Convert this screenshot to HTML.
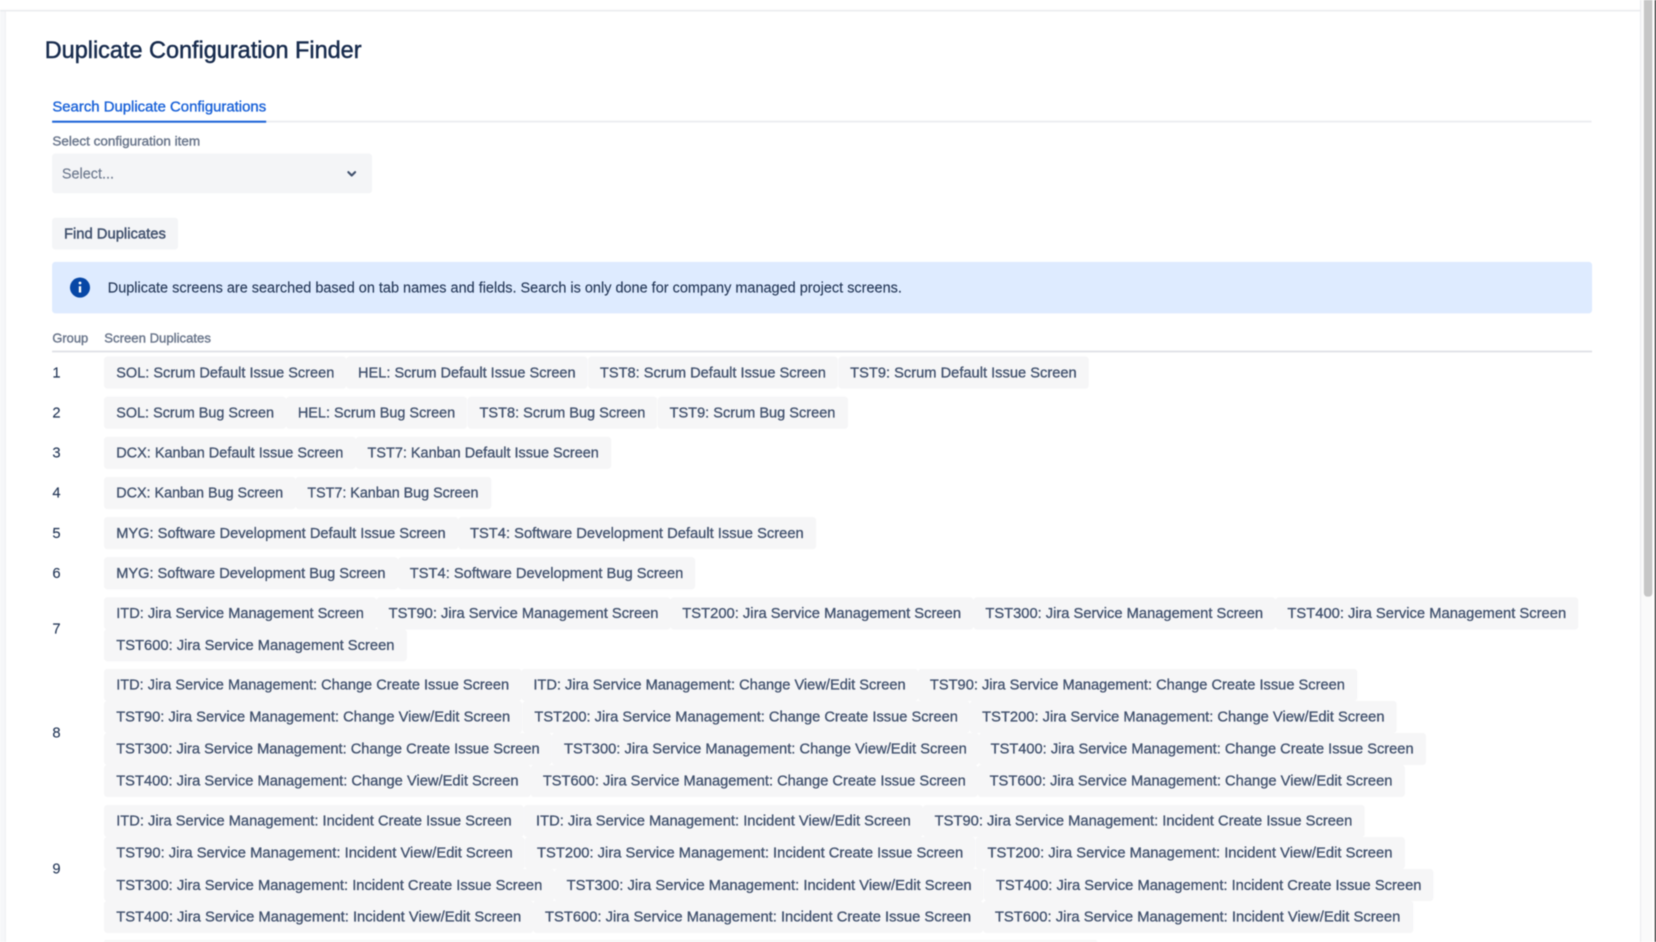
<!DOCTYPE html>
<html><head><meta charset="utf-8"><title>Duplicate Configuration Finder</title>
<style>
html,body{margin:0;padding:0;width:1656px;height:942px;overflow:hidden;background:#fff}
svg{display:block;position:absolute;left:0;top:0;filter:blur(.45px)}
text{font-family:"Liberation Sans",sans-serif;font-size:14px;fill:#42526e;stroke:#42526e;stroke-width:.3px;transform:translateY(-.4px)}
.c{fill:#f6f6f7;stroke:#f6f6f7;stroke-width:.5px}
.l{font-size:12px;fill:#6b778c;stroke:#6b778c;stroke-width:.38px}
.n{fill:#253858;stroke:#253858;stroke-width:.12px}
</style></head><body>
<svg width="1656" height="942" viewBox="0 0 1568 892" xmlns="http://www.w3.org/2000/svg">
<rect x="0" y="0" width="1568" height="892" fill="#fff"/>
<rect x="0" y="10" width="4.5" height="882" fill="#f6f7f9"/>
<rect x="4.5" y="10" width="1" height="882" fill="#eeeff2"/>
<rect x="0" y="9.3" width="1553" height="1.6" fill="#ebecef"/>
<rect x="1553" y="0" width="1" height="892" fill="#e8e9ec"/>
<rect x="1554" y="0" width="10.6" height="892" fill="#fafafa"/>
<rect x="1556.6" y="-6" width="8" height="571" rx="3.5" fill="#c6c6c6"/>
<rect x="1567" y="0" width="1" height="892" fill="#000"/>

<text x="42.3" y="55.4" textLength="300" lengthAdjust="spacingAndGlyphs" style="font-size:23px;fill:#172b4d;stroke:#172b4d;stroke-width:.45px">Duplicate Configuration Finder</text>

<text x="49.5" y="106" textLength="202.5" lengthAdjust="spacingAndGlyphs" style="fill:#1a62d8;stroke:#1a62d8;stroke-width:.35px">Search Duplicate Configurations</text>
<rect x="49.3" y="114.3" width="1457.7" height="1.7" fill="#ebecf0"/>
<rect x="49.3" y="114.3" width="202.7" height="1.9" fill="#1a62d8"/>

<text class="l" x="49.5" y="138" textLength="140" lengthAdjust="spacingAndGlyphs">Select configuration item</text>
<rect x="49.3" y="145.4" width="302.9" height="37.6" rx="3" fill="#f4f5f7"/>
<text x="58.5" y="169.3" textLength="49.5" lengthAdjust="spacingAndGlyphs" style="fill:#6b778c;stroke:#6b778c;stroke-width:.12px">Select...</text>
<path d="M329.8 163l3.2 3.2 3.2-3.2" fill="none" stroke="#42526e" stroke-width="2" stroke-linecap="round" stroke-linejoin="round"/>

<rect x="49.3" y="206.2" width="119.2" height="30" rx="3" fill="#f4f5f7"/>
<text x="60.5" y="226.4" textLength="96.5" lengthAdjust="spacingAndGlyphs" style="stroke-width:.42px">Find Duplicates</text>

<rect x="49.3" y="248" width="1458.2" height="48.7" rx="3" fill="#deebff"/>
<circle cx="75.7" cy="272.3" r="9.5" fill="#0747a6"/>
<rect x="74.6" y="271" width="2.2" height="6" fill="#fff"/>
<circle cx="75.7" cy="268" r="1.3" fill="#fff"/>
<text class="n" x="102" y="277.4" textLength="752" lengthAdjust="spacingAndGlyphs">Duplicate screens are searched based on tab names and fields. Search is only done for company managed project screens.</text>

<text class="l" x="49.5" y="324.9" textLength="34" lengthAdjust="spacingAndGlyphs">Group</text>
<text class="l" x="98.7" y="324.9" textLength="101" lengthAdjust="spacingAndGlyphs">Screen Duplicates</text>
<rect x="49.3" y="332" width="1458.2" height="1.7" fill="#dfe1e6"/>

<text class="n" x="49.5" y="357.7">1</text>
<text class="n" x="49.5" y="395.7">2</text>
<text class="n" x="49.5" y="433.7">3</text>
<text class="n" x="49.5" y="471.7">4</text>
<text class="n" x="49.5" y="509.7">5</text>
<text class="n" x="49.5" y="547.7">6</text>
<text class="n" x="49.5" y="600.5">7</text>
<text class="n" x="49.5" y="699">8</text>
<text class="n" x="49.5" y="827.5">9</text>

<!-- chips -->
<rect class="c" x="98.7" y="337.8" width="229" height="30" rx="3"/><rect class="c" x="328" y="337.8" width="228" height="30" rx="3"/><rect class="c" x="557" y="337.8" width="236" height="30" rx="3"/><rect class="c" x="794" y="337.8" width="236.7" height="30" rx="3"/>
<text x="110" y="357.7" textLength="206.5" lengthAdjust="spacingAndGlyphs">SOL: Scrum Default Issue Screen</text><text x="339" y="357.7" textLength="206" lengthAdjust="spacingAndGlyphs">HEL: Scrum Default Issue Screen</text><text x="568" y="357.7" textLength="214" lengthAdjust="spacingAndGlyphs">TST8: Scrum Default Issue Screen</text><text x="805" y="357.7" textLength="214.5" lengthAdjust="spacingAndGlyphs">TST9: Scrum Default Issue Screen</text>

<rect class="c" x="98.7" y="375.8" width="172" height="30" rx="3"/><rect class="c" x="271" y="375.8" width="171" height="30" rx="3"/><rect class="c" x="443" y="375.8" width="179" height="30" rx="3"/><rect class="c" x="623" y="375.8" width="179.7" height="30" rx="3"/>
<text x="110" y="395.7" textLength="149.5" lengthAdjust="spacingAndGlyphs">SOL: Scrum Bug Screen</text><text x="282" y="395.7" textLength="149" lengthAdjust="spacingAndGlyphs">HEL: Scrum Bug Screen</text><text x="454" y="395.7" textLength="157" lengthAdjust="spacingAndGlyphs">TST8: Scrum Bug Screen</text><text x="634" y="395.7" textLength="157" lengthAdjust="spacingAndGlyphs">TST9: Scrum Bug Screen</text>

<rect class="c" x="98.7" y="413.8" width="238" height="30" rx="3"/><rect class="c" x="337" y="413.8" width="241.5" height="30" rx="3"/>
<text x="110" y="433.7" textLength="215" lengthAdjust="spacingAndGlyphs">DCX: Kanban Default Issue Screen</text><text x="348" y="433.7" textLength="219" lengthAdjust="spacingAndGlyphs">TST7: Kanban Default Issue Screen</text>

<rect class="c" x="98.7" y="451.8" width="181" height="30" rx="3"/><rect class="c" x="280" y="451.8" width="185" height="30" rx="3"/>
<text x="110" y="471.7" textLength="158" lengthAdjust="spacingAndGlyphs">DCX: Kanban Bug Screen</text><text x="291" y="471.7" textLength="162" lengthAdjust="spacingAndGlyphs">TST7: Kanban Bug Screen</text>

<rect class="c" x="98.7" y="489.8" width="335" height="30" rx="3"/><rect class="c" x="434" y="489.8" width="338.5" height="30" rx="3"/>
<text x="110" y="509.7" textLength="312" lengthAdjust="spacingAndGlyphs">MYG: Software Development Default Issue Screen</text><text x="445" y="509.7" textLength="316" lengthAdjust="spacingAndGlyphs">TST4: Software Development Default Issue Screen</text>

<rect class="c" x="98.7" y="527.8" width="278" height="30" rx="3"/><rect class="c" x="377" y="527.8" width="281" height="30" rx="3"/>
<text x="110" y="547.7" textLength="255" lengthAdjust="spacingAndGlyphs">MYG: Software Development Bug Screen</text><text x="388" y="547.7" textLength="259" lengthAdjust="spacingAndGlyphs">TST4: Software Development Bug Screen</text>

<rect class="c" x="98.7" y="565.8" width="257.5" height="30" rx="3"/><rect class="c" x="356.7" y="565.8" width="278" height="30" rx="3"/><rect class="c" x="635" y="565.8" width="286.5" height="30" rx="3"/><rect class="c" x="922" y="565.8" width="285.5" height="30" rx="3"/><rect class="c" x="1208" y="565.8" width="286.2" height="30" rx="3"/>
<text x="110" y="585.7" textLength="234.5" lengthAdjust="spacingAndGlyphs">ITD: Jira Service Management Screen</text><text x="368" y="585.7" textLength="255.5" lengthAdjust="spacingAndGlyphs">TST90: Jira Service Management Screen</text><text x="646" y="585.7" textLength="264" lengthAdjust="spacingAndGlyphs">TST200: Jira Service Management Screen</text><text x="933" y="585.7" textLength="263" lengthAdjust="spacingAndGlyphs">TST300: Jira Service Management Screen</text><text x="1219" y="585.7" textLength="264" lengthAdjust="spacingAndGlyphs">TST400: Jira Service Management Screen</text>

<rect class="c" x="98.7" y="596" width="286.3" height="30" rx="3"/>
<text x="110" y="615.7" textLength="263.5" lengthAdjust="spacingAndGlyphs">TST600: Jira Service Management Screen</text>

<rect class="c" x="98.7" y="633.6" width="395" height="30" rx="3"/><rect class="c" x="494" y="633.6" width="375" height="30" rx="3"/><rect class="c" x="869.5" y="633.6" width="415.5" height="30" rx="3"/>
<text x="110" y="653.5" textLength="372" lengthAdjust="spacingAndGlyphs">ITD: Jira Service Management: Change Create Issue Screen</text><text x="505" y="653.5" textLength="352.5" lengthAdjust="spacingAndGlyphs">ITD: Jira Service Management: Change View/Edit Screen</text><text x="880.5" y="653.5" textLength="393" lengthAdjust="spacingAndGlyphs">TST90: Jira Service Management: Change Create Issue Screen</text>

<rect class="c" x="98.7" y="663.9" width="395.5" height="30" rx="3"/><rect class="c" x="495" y="663.9" width="423" height="30" rx="3"/><rect class="c" x="918.5" y="663.9" width="403.7" height="30" rx="3"/>
<text x="110" y="683.7" textLength="373" lengthAdjust="spacingAndGlyphs">TST90: Jira Service Management: Change View/Edit Screen</text><text x="506" y="683.7" textLength="401" lengthAdjust="spacingAndGlyphs">TST200: Jira Service Management: Change Create Issue Screen</text><text x="930" y="683.7" textLength="381" lengthAdjust="spacingAndGlyphs">TST200: Jira Service Management: Change View/Edit Screen</text>

<rect class="c" x="98.7" y="694.2" width="423.5" height="30" rx="3"/><rect class="c" x="522.7" y="694.2" width="404" height="30" rx="3"/><rect class="c" x="927" y="694.2" width="423" height="30" rx="3"/>
<text x="110" y="714" textLength="401" lengthAdjust="spacingAndGlyphs">TST300: Jira Service Management: Change Create Issue Screen</text><text x="534" y="714" textLength="381.5" lengthAdjust="spacingAndGlyphs">TST300: Jira Service Management: Change View/Edit Screen</text><text x="938" y="714" textLength="400.5" lengthAdjust="spacingAndGlyphs">TST400: Jira Service Management: Change Create Issue Screen</text>

<rect class="c" x="98.7" y="724.5" width="403.5" height="30" rx="3"/><rect class="c" x="502.7" y="724.5" width="423" height="30" rx="3"/><rect class="c" x="926" y="724.5" width="404" height="30" rx="3"/>
<text x="110" y="744.3" textLength="381" lengthAdjust="spacingAndGlyphs">TST400: Jira Service Management: Change View/Edit Screen</text><text x="514" y="744.3" textLength="400.5" lengthAdjust="spacingAndGlyphs">TST600: Jira Service Management: Change Create Issue Screen</text><text x="937" y="744.3" textLength="381.5" lengthAdjust="spacingAndGlyphs">TST600: Jira Service Management: Change View/Edit Screen</text>

<rect class="c" x="98.7" y="762.5" width="397" height="30" rx="3"/><rect class="c" x="496.2" y="762.5" width="377.5" height="30" rx="3"/><rect class="c" x="874" y="762.5" width="418" height="30" rx="3"/>
<text x="110" y="782.3" textLength="374.5" lengthAdjust="spacingAndGlyphs">ITD: Jira Service Management: Incident Create Issue Screen</text><text x="507.5" y="782.3" textLength="355" lengthAdjust="spacingAndGlyphs">ITD: Jira Service Management: Incident View/Edit Screen</text><text x="885" y="782.3" textLength="395.5" lengthAdjust="spacingAndGlyphs">TST90: Jira Service Management: Incident Create Issue Screen</text>

<rect class="c" x="98.7" y="792.8" width="398" height="30" rx="3"/><rect class="c" x="497.2" y="792.8" width="426" height="30" rx="3"/><rect class="c" x="924" y="792.8" width="406" height="30" rx="3"/>
<text x="110" y="812.6" textLength="375.5" lengthAdjust="spacingAndGlyphs">TST90: Jira Service Management: Incident View/Edit Screen</text><text x="508.5" y="812.6" textLength="403.5" lengthAdjust="spacingAndGlyphs">TST200: Jira Service Management: Incident Create Issue Screen</text><text x="935" y="812.6" textLength="383.5" lengthAdjust="spacingAndGlyphs">TST200: Jira Service Management: Incident View/Edit Screen</text>

<rect class="c" x="98.7" y="823.1" width="426" height="30" rx="3"/><rect class="c" x="525.2" y="823.1" width="406" height="30" rx="3"/><rect class="c" x="932" y="823.1" width="425" height="30" rx="3"/>
<text x="110" y="843" textLength="403.5" lengthAdjust="spacingAndGlyphs">TST300: Jira Service Management: Incident Create Issue Screen</text><text x="536.5" y="843" textLength="383.5" lengthAdjust="spacingAndGlyphs">TST300: Jira Service Management: Incident View/Edit Screen</text><text x="943" y="843" textLength="403" lengthAdjust="spacingAndGlyphs">TST400: Jira Service Management: Incident Create Issue Screen</text>

<rect class="c" x="98.7" y="853.2" width="406" height="30" rx="3"/><rect class="c" x="505" y="853.2" width="425.5" height="30" rx="3"/><rect class="c" x="931" y="853.2" width="407" height="30" rx="3"/>
<text x="110" y="873" textLength="383.5" lengthAdjust="spacingAndGlyphs">TST400: Jira Service Management: Incident View/Edit Screen</text><text x="516" y="873" textLength="403.5" lengthAdjust="spacingAndGlyphs">TST600: Jira Service Management: Incident Create Issue Screen</text><text x="942" y="873" textLength="384" lengthAdjust="spacingAndGlyphs">TST600: Jira Service Management: Incident View/Edit Screen</text>

<rect class="c" x="98.7" y="890.2" width="940" height="4" rx="2"/>
</svg>
</body></html>
